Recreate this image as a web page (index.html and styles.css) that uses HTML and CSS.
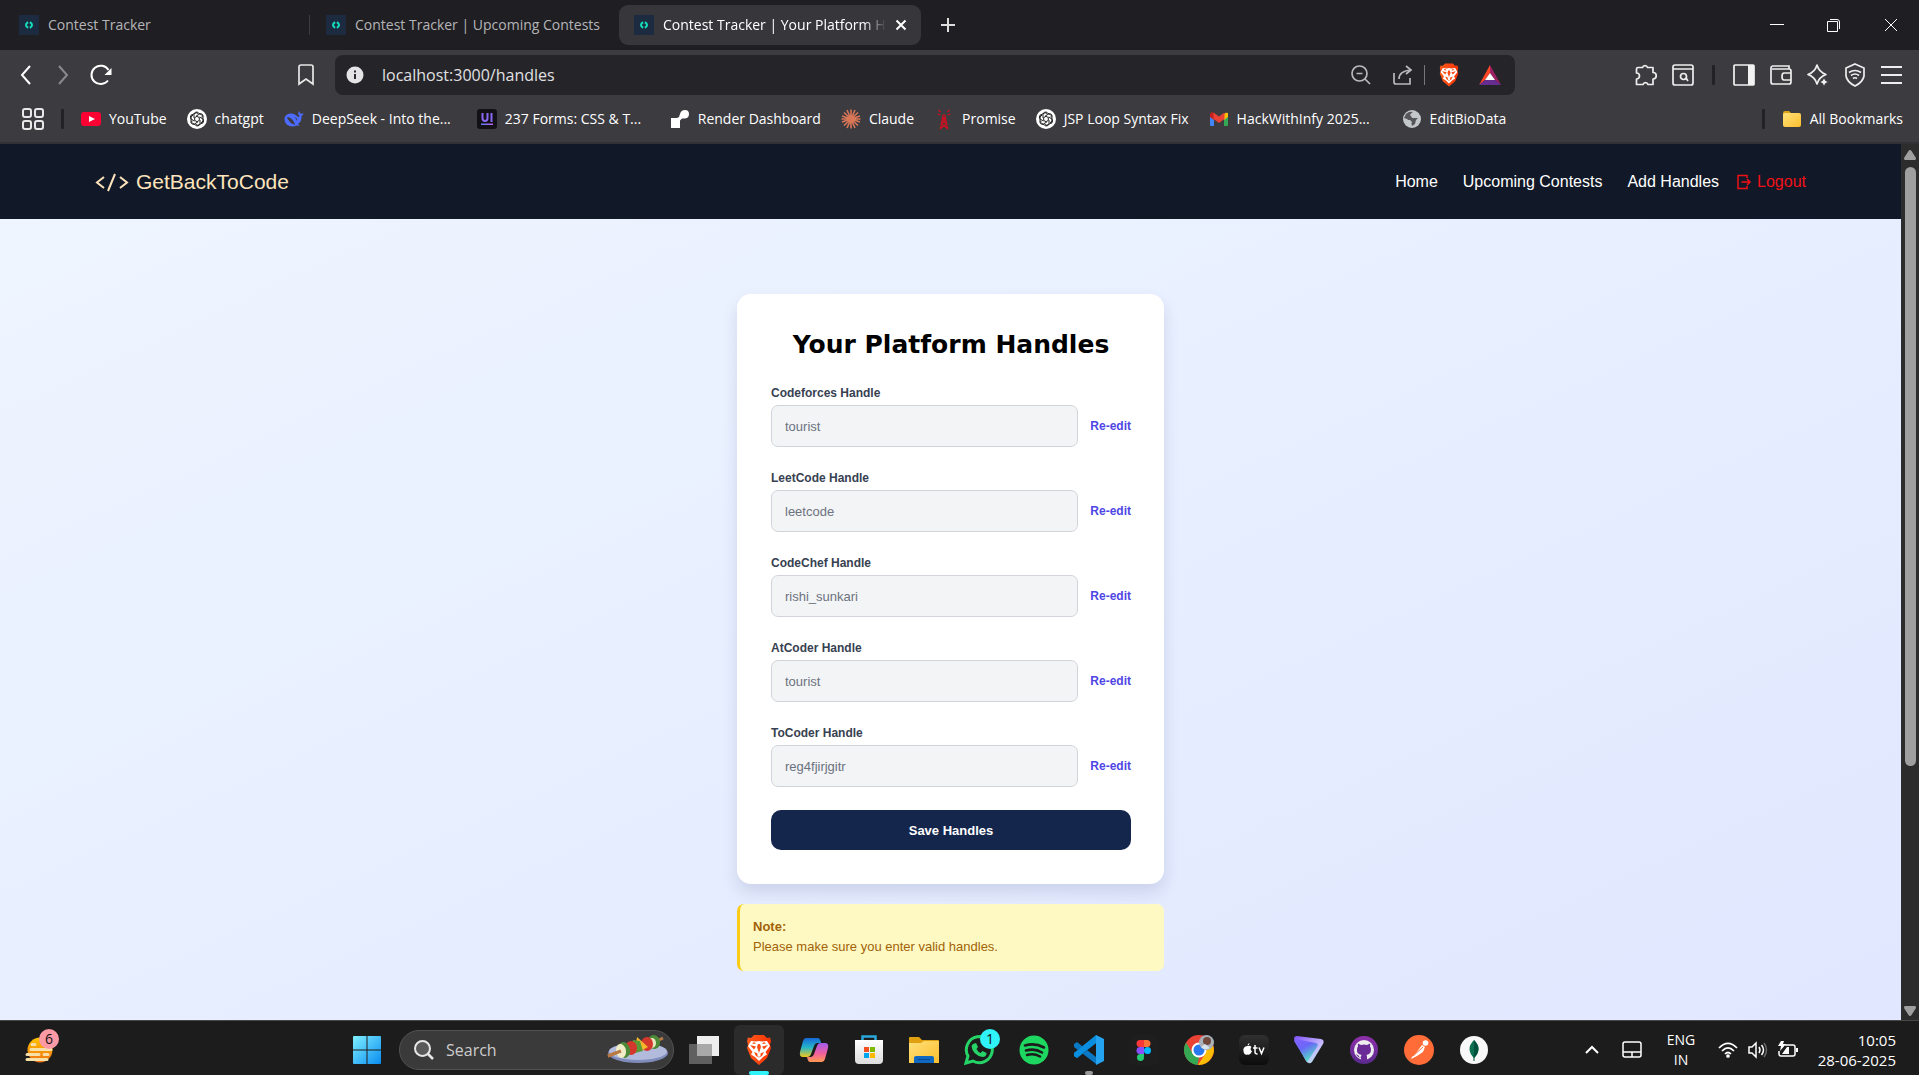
FILE: index.html
```html
<!DOCTYPE html>
<html lang="en">
<head>
<meta charset="utf-8">
<title>Contest Tracker | Your Platform Handles</title>
<link rel="stylesheet" href="styles.css">
</head>
<body>
<svg class="defs" aria-hidden="true">
  <defs>
    <linearGradient id="win" x1="0" y1="0" x2="1" y2="1"><stop offset="0" stop-color="#7ff0ff"/><stop offset="1" stop-color="#0a8cf0"/></linearGradient>
    <linearGradient id="fold" x1="0" y1="0" x2="1" y2="1"><stop offset="0" stop-color="#ffe07a"/><stop offset="1" stop-color="#fcbf2d"/></linearGradient>
    <linearGradient id="sun" x1="0" y1="0" x2="0" y2="1"><stop offset="0" stop-color="#ffc400"/><stop offset="1" stop-color="#f07010"/></linearGradient>
    <linearGradient id="lion" x1="0" y1="0" x2="1" y2="0"><stop offset="0" stop-color="#ff5a1c"/><stop offset="1" stop-color="#fb3404"/></linearGradient>
    <linearGradient id="cpa" x1="0" y1="0" x2="0" y2="1"><stop offset="0" stop-color="#1668d8"/><stop offset=".5" stop-color="#25b6c8"/><stop offset="1" stop-color="#f2c81c"/></linearGradient>
    <linearGradient id="cpb" x1="0" y1="0" x2="0" y2="1"><stop offset="0" stop-color="#a45cf0"/><stop offset=".55" stop-color="#f0609c"/><stop offset="1" stop-color="#ff9a50"/></linearGradient>
    <linearGradient id="pro" x1="0" y1="0" x2=".6" y2="1"><stop offset="0" stop-color="#8560ff"/><stop offset=".45" stop-color="#6a68f8"/><stop offset="1" stop-color="#50e8c0"/></linearGradient>
    <linearGradient id="proe" x1="0" y1="0" x2="1" y2="1"><stop offset="0" stop-color="#7c50f8"/><stop offset=".6" stop-color="#c8baff"/><stop offset="1" stop-color="#a0ffe0"/></linearGradient>
    <linearGradient id="git" x1="0" y1="0" x2="0" y2="1"><stop offset="0" stop-color="#8f30ac"/><stop offset="1" stop-color="#582a8c"/></linearGradient>
    <linearGradient id="store" x1="0" y1="0" x2="0" y2="1"><stop offset="0" stop-color="#fff"/><stop offset="1" stop-color="#dcdcdc"/></linearGradient>
    <linearGradient id="ui" x1="0" y1="0" x2="1" y2="0"><stop offset="0" stop-color="#5b7cff"/><stop offset="1" stop-color="#c060f0"/></linearGradient>
    <linearGradient id="tv" x1="0" y1="0" x2="0" y2="1"><stop offset="0" stop-color="#303030"/><stop offset="1" stop-color="#0c0c0c"/></linearGradient>
    <symbol id="favicon" viewBox="0 0 20 20"><path fill="#1d2b41" d="M0 0h20v20H0z"/><path fill="none" stroke="#13e0bd" stroke-width="2" d="M9.200 7.200Q7 8 7 10t2.200 2.800M10.800 7.200Q13 8 13 10t-2.200 2.800"/></symbol>
    <symbol id="lion-face" viewBox="0 0 26 30"><path fill="url(#lion)" d="M8 0h10l3 3 3-.5 1 3.500-1 4 1 3-4 10-8 7-8-7-4-10 1-3-1-4 1-3.500L5 3z"/><path fill="#fff" d="m5 6 5 .5 3-.5 3 .5 5-.5 3 5-4.500 6 1.500 2.500-4 2.500-4 4-4-4L5 19.500 6.500 17 2 11z"/><path fill="#fa4c12" d="m4 10 6 1.500-2 3zM22 10l-6 1.500 2 3zM11 12l2 6 2-6-1-3h-2zM8 17l5 2 5-2-2 4-3 1.500L10 21zM8 7l2 2-4-.5zM18 7l-2 2 4-.5z"/><path fill="#fff" d="m11.500 17 1.500 1.500 1.500-1.500v4l-1.500 1-1.500-1z"/></symbol>
    <symbol id="openai" viewBox="0 0 20 20"><circle cx="10" cy="10" r="10" fill="#fff"/><g fill="none" stroke="#222" stroke-width="1"><path id="petal" d="M7 9V5.500a2.600 2.600 0 0 1 4.600-1.500L14 5.400a2.600 2.600 0 0 1 1.200 3"/><use href="#petal" transform="rotate(60 10 10)"/><use href="#petal" transform="rotate(120 10 10)"/><use href="#petal" transform="rotate(180 10 10)"/><use href="#petal" transform="rotate(240 10 10)"/><use href="#petal" transform="rotate(300 10 10)"/><path d="m10 7.300 2.300 1.300v2.800L10 12.700l-2.300-1.300V8.600z"/></g></symbol>
    <symbol id="folder" viewBox="0 0 20 20"><path fill="#dba018" d="M1 4q0-2 2-2h4l2 2v5H1z"/><rect x="1" y="4" width="18" height="14" rx="2" fill="url(#fold)"/></symbol>
  </defs>
</svg>

<header class="browser">
  <div class="tabs">
    <button class="tab"><svg width="20" height="20"><use href="#favicon"/></svg><span class="tab-title">Contest Tracker</span></button>
    <span class="tab-rule"></span>
    <button class="tab"><svg width="20" height="20"><use href="#favicon"/></svg><span class="tab-title">Contest Tracker | Upcoming Contests</span></button>
    <div class="tab tab-active"><svg width="20" height="20"><use href="#favicon"/></svg><span class="tab-title tab-fade">Contest Tracker | Your Platform Handles</span><button class="icon-btn" aria-label="Close tab"><svg width="12" height="12" viewBox="0 0 12 12"><path d="m1.500 1.500 9 9m0-9-9 9" stroke="#fff" stroke-width="2"/></svg></button></div>
    <button class="icon-btn new-tab" aria-label="New tab"><svg width="14" height="14" viewBox="0 0 14 14"><path d="M7 0v14M0 7h14" stroke="#ddd" stroke-width="2"/></svg></button>
    <div class="window-controls">
      <button class="icon-btn" aria-label="Minimize"><svg width="14" height="14" viewBox="0 0 14 14"><path d="M0 6.500h14" stroke="#fff"/></svg></button>
      <button class="icon-btn" aria-label="Restore"><svg width="14" height="14" viewBox="0 0 14 14"><path d="M.5 3.500h10v10H.5zM3 1.500h7q2.500 0 2.500 2.500v7" fill="none" stroke="#fff"/></svg></button>
      <button class="icon-btn" aria-label="Close"><svg width="14" height="14" viewBox="0 0 14 14"><path d="m1 1 12 12m0-12L1 13" stroke="#fff"/></svg></button>
    </div>
  </div>

  <div class="toolbar">
    <div class="nav-buttons">
      <button class="icon-btn" aria-label="Back"><svg width="20" height="22" viewBox="0 0 20 22"><path d="m14 2-8 9 8 9" fill="none" stroke="#fff" stroke-width="2"/></svg></button>
      <button class="icon-btn" aria-label="Forward"><svg width="20" height="22" viewBox="0 0 20 22"><path d="m6 2 8 9-8 9" fill="none" stroke="#8a8a8d" stroke-width="2"/></svg></button>
      <button class="icon-btn" aria-label="Reload"><svg width="22" height="22" viewBox="0 0 22 22"><path d="M18.500 6A9.200 9.200 0 1 0 18 16.500" fill="none" stroke="#fff" stroke-width="2"/><path d="M21.500 4v7h-7z" fill="#fff"/></svg></button>
    </div>
    <button class="icon-btn bookmark" aria-label="Bookmark this page"><svg width="16" height="22" viewBox="0 0 16 22"><path d="M1 20V3q0-2 2-2h10q2 0 2 2v17l-7-5z" fill="none" stroke="#e8e8e8" stroke-width="1.700"/></svg></button>
    <div class="address">
      <svg width="18" height="18" viewBox="0 0 18 18"><circle cx="9" cy="9" r="8.500" fill="#e4e4e6"/><path d="M9 8v5M9 4.500V6.500" stroke="#29292d" stroke-width="2"/></svg>
      <input class="url" type="text" aria-label="Address" value="localhost:3000/handles">
      <svg width="20" height="20" viewBox="0 0 20 20" fill="none" stroke="#b9b9bc" stroke-width="1.700"><circle cx="8.500" cy="8.500" r="7.500"/><path d="m14 14 5 5M5.500 8.500h6"/></svg>
      <svg class="share" width="20" height="20" viewBox="0 0 20 20" fill="none" stroke="#b9b9bc" stroke-width="1.700"><path d="M1 8v9q0 2 2 2h14v-6M6 14q0-8 12-9M13 1l5 4-5 4"/></svg>
      <span class="address-rule"></span>
      <svg width="20" height="24"><use href="#lion-face"/></svg>
      <svg class="bat" width="22" height="20" viewBox="0 0 22 20"><path fill="#ff4724" d="M11 0v8l-5 7-6 5z"/><path fill="#9e1f63" d="M11 0v8l5 7 6 5z"/><path fill="#662d91" d="M0 20 6 15h10l6 5z"/><path fill="#fff" d="m11 8 5 7H6z"/></svg>
    </div>
    <div class="tools">
      <button class="icon-btn" aria-label="Extensions"><svg width="22" height="22" viewBox="0 0 22 22" fill="none" stroke="#eee" stroke-width="1.700" stroke-linejoin="round"><path d="M3 3.500h4.500a2.600 2.600 0 0 1 5 0H18v5a2.800 2.800 0 0 1 0 6.500v5.500h-5a2.600 2.600 0 0 0-5 0H1.500V15a3 3 0 0 0 0-6V5q0-1.500 1.500-1.500z"/></svg></button>
      <button class="icon-btn" aria-label="Search page"><svg width="22" height="22" viewBox="0 0 22 22" fill="none" stroke="#eee" stroke-width="1.700"><rect x="1" y="1" width="20" height="20" rx="2"/><path d="M1 5h20m-7 9 2 3"/><circle cx="11.500" cy="12.500" r="3"/></svg></button>
      <span class="rule"></span>
      <button class="icon-btn" aria-label="Sidebar"><svg width="22" height="22" viewBox="0 0 22 22"><rect x="1" y="1" width="20" height="20" rx="1" fill="none" stroke="#f2f2f2" stroke-width="1.700"/><path fill="#f2f2f2" d="M15 1h6v20h-6z"/></svg></button>
      <button class="icon-btn" aria-label="Wallet"><svg width="22" height="22" viewBox="0 0 22 22" fill="none" stroke="#eee" stroke-width="1.700"><path d="M19 5V2H3a2 2 0 0 0-2 2v14q0 2 2 2h16q2 0 2-2V7q0-2-2-2H2M21 9h-7q-2 0-2 3.500t2 3.500h7z"/></svg></button>
      <button class="icon-btn" aria-label="Leo AI"><svg width="22" height="22" viewBox="0 0 22 22"><path fill="none" stroke="#eee" stroke-width="1.700" stroke-linejoin="round" d="M10 1q2 7 9 9.500-7 2.500-9 9.500-2-7-9-9.500Q8 8 10 1z"/><path fill="#eee" stroke="#3c3b3f" d="m17 13 1.500 3.500L22 18l-3.500 1.500L17 23l-1.500-3.500L12 18l3.500-1.500z"/></svg></button>
      <button class="icon-btn" aria-label="VPN"><svg width="22" height="24" viewBox="0 0 22 24" fill="none" stroke="#eee" stroke-width="1.700"><path d="m11 1 9 4v8q-1 6-9 10-8-4-9-10V5zM5 9.500q6-4 12 0M7 12.500q4-3 8 0M9 15.500q2-1.500 4 0"/></svg></button>
      <button class="icon-btn" aria-label="Menu"><svg width="22" height="20" viewBox="0 0 22 20"><path d="M0 2h21M0 10h21M0 18h21" stroke="#eee" stroke-width="2"/></svg></button>
    </div>
  </div>

  <nav class="bookmarks" aria-label="Bookmarks">
    <svg width="22" height="22" viewBox="0 0 22 22" fill="none" stroke="#e8e8e8" stroke-width="2"><rect x="1" y="1" width="8" height="8" rx="2"/><rect x="13" y="1" width="8" height="8" rx="2"/><rect x="1" y="13" width="8" height="8" rx="2"/><rect x="13" y="13" width="8" height="8" rx="2"/></svg>
    <span class="rule"></span>
    <a class="mark" href="#"><svg width="20" height="20" viewBox="0 0 20 20"><rect y="3" width="20" height="14" rx="3" fill="#ff0033"/><path fill="#fff" d="m8 7 6 3-6 3z"/></svg>YouTube</a>
    <a class="mark" href="#"><svg width="20" height="20"><use href="#openai"/></svg>chatgpt</a>
    <a class="mark" href="#"><svg width="20" height="20" viewBox="0 0 20 20"><path fill="#4d6bfe" d="M19.500 4q-1.500 1-3 .500-1-.5-1-2.500l-1 1q-1 2 1 4-1 1.500-2 .5Q10 4 7 4.500 0 5 .5 11q1 6 8 6.500 2.500 0 4-1l3 .5-1.500-2q4-3 3.500-8 2-1 2-3z"/><path fill="#3c3b3f" d="M3 8q4 0 7 5l1 3Q4 13 3 8zM10 8q4 1 3 4-1-3-3-4z"/></svg><span class="mark-long">DeepSeek - Into the...</span></a>
    <a class="mark" href="#"><svg width="20" height="20" viewBox="0 0 20 20"><rect width="20" height="20" rx="3" fill="#121216"/><path d="M5.500 4v5q0 3 2.500 3t2.500-3V4M14.500 4v9" fill="none" stroke="#8968f4" stroke-width="2"/><path fill="url(#ui)" d="M4 14.500h12v1.500H4z"/></svg><span class="mark-long">237 Forms: CSS &amp; T...</span></a>
    <a class="mark" href="#"><svg width="20" height="20" viewBox="0 0 20 20"><path fill="#fff" d="M1 9h6l2-1 1-3q1-4 5-4 4 0 4 4t-4 4.500h-3l-2 2V19H1z"/></svg>Render Dashboard</a>
    <a class="mark" href="#"><svg width="20" height="20" viewBox="0 0 20 20"><path d="M10 .5v19M.5 10h19M3 3.500l14 13M3 16.500l14-13M6 1l8 18M14 1 6 19M1 7l18 6M1 13l18-6" stroke="#d97757" stroke-width="1.600"/></svg>Claude</a>
    <a class="mark" href="#"><svg width="20" height="20" viewBox="0 0 20 20"><path d="M9 6 6.500 19.500l6-4.500-4-4 3-3M11 6l2.500 13.500-6-4.500 4-4-3-3M8.500 6h3M6.500 6 3.500 5m3-2L4.500 1m9 5 3-1m-3-2 2-2" fill="none" stroke="#d01020" stroke-width="1.200"/></svg>Promise</a>
    <a class="mark" href="#"><svg width="20" height="20"><use href="#openai"/></svg>JSP Loop Syntax Fix</a>
    <a class="mark" href="#"><svg width="20" height="20" viewBox="0 0 20 20"><path fill="#4285f4" d="M1 5h4v12H2q-1 0-1-1z"/><path fill="#34a853" d="M15 5h4v11q0 1-1 1h-3z"/><path fill="#fbbc04" d="M15 5q2-2 4-1v4l-4 3z"/><path fill="#c5221f" d="M1 5q1-3 4-1v7L1 8z"/><path fill="#ea4335" d="m4.500 3.500 5.500 4 5.500-4V10L10 14l-5.500-4z"/></svg><span class="mark-long">HackWithInfy 2025...</span></a>
    <a class="mark" href="#"><svg width="20" height="20" viewBox="0 0 20 20"><circle cx="10" cy="10" r="9" fill="#c4c7c9"/><path fill="#3c3b3f" d="M4 5q3-3 7-2-2 1-3 3l3 3h5l-2 2-1 4-3 2-1-4-4-3-3-1z" opacity=".8"/><path fill="#c4c7c9" d="m9 6 3-2 3 2-1 2-4 1zM4 11l4 0 2 2-2 4-3-2z"/></svg>EditBioData</a>
    <span class="rule push"></span>
    <a class="mark" href="#"><svg width="20" height="20"><use href="#folder"/></svg>All Bookmarks</a>
  </nav>
</header>

<div class="viewport">
  <div class="page">
    <header class="site-nav">
      <a class="brand" href="#"><svg width="34" height="18" viewBox="0 0 34 18" fill="none" stroke="#fde4bd" stroke-width="2"><path d="m9 4-7 5.500L9 15M20 1l-7 17M25 4l7 5.500-7 5.500"/></svg>GetBackToCode</a>
      <nav class="site-links">
        <a href="#">Home</a>
        <a href="#">Upcoming Contests</a>
        <a href="#">Add Handles</a>
        <button class="logout"><svg width="14" height="16" viewBox="0 0 14 16" fill="none" stroke="#f01018" stroke-width="1.500"><path d="M10 4V1.500H1v13h9V12M4.500 8H13m-3-3 3 3-3 3"/></svg>Logout</button>
      </nav>
    </header>
    <main class="content">
      <form class="card">
        <h1>Your Platform Handles</h1>
        <div class="field"><label for="cf">Codeforces Handle</label><div class="field-row"><input id="cf" type="text" value="tourist" disabled><button type="button" class="edit">Re-edit</button></div></div>
        <div class="field"><label for="lc">LeetCode Handle</label><div class="field-row"><input id="lc" type="text" value="leetcode" disabled><button type="button" class="edit">Re-edit</button></div></div>
        <div class="field"><label for="cc">CodeChef Handle</label><div class="field-row"><input id="cc" type="text" value="rishi_sunkari" disabled><button type="button" class="edit">Re-edit</button></div></div>
        <div class="field"><label for="ac">AtCoder Handle</label><div class="field-row"><input id="ac" type="text" value="tourist" disabled><button type="button" class="edit">Re-edit</button></div></div>
        <div class="field"><label for="tc">ToCoder Handle</label><div class="field-row"><input id="tc" type="text" value="reg4fjirjgitr" disabled><button type="button" class="edit">Re-edit</button></div></div>
        <button class="save" type="submit">Save Handles</button>
      </form>
      <aside class="note"><strong>Note:</strong><p>Please make sure you enter valid handles.</p></aside>
    </main>
  </div>
  <div class="scrollbar" aria-hidden="true">
    <svg width="12" height="10" viewBox="0 0 12 10"><path fill="#9f9f9f" d="M6 0q1 0 1.500 1L12 8q0 2-1 2H1Q0 10 0 8l4.500-7Q5 0 6 0z"/></svg>
    <div class="track"><div class="thumb"></div></div>
    <svg width="12" height="10" viewBox="0 0 12 10"><path fill="#9f9f9f" d="M6 10q1 0 1.500-1L12 2q0-2-1-2H1Q0 0 0 2l4.500 7Q5 10 6 10z"/></svg>
  </div>
</div>

<footer class="taskbar">
  <button class="icon-btn weather" aria-label="Weather"><svg width="28" height="28" viewBox="0 0 28 28"><circle cx="15" cy="14" r="12.500" fill="url(#sun)"/><path d="M7 8.500h3M6 13.500h20M2 18.500h12m5 0h4M2 23.500h20" stroke="#f7dfa8" stroke-width="3" stroke-linecap="round"/></svg><span class="badge badge-pink">6</span></button>
  <div class="apps">
    <button class="app" aria-label="Start"><svg width="30" height="30" viewBox="0 0 30 30"><path fill="url(#win)" d="M1 2q0-1 1-1h12.500v13.500H1zM15.500 1H28q1 0 1 1v12.500H15.500zM1 15.500h13.500V29H2q-1 0-1-1zM15.500 15.500H29V28q0 1-1 1H15.500z"/></svg></button>
    <label class="search">
      <svg width="20" height="20" viewBox="0 0 20 20" fill="none" stroke="#e8e8e8" stroke-width="2"><circle cx="8.500" cy="8.500" r="7.500" fill="#5a5a5a"/><path d="m14 14 5 5" stroke-width="2.500"/></svg>
      <input type="text" placeholder="Search" aria-label="Search">
      <svg width="62" height="30" viewBox="0 0 62 30"><ellipse cx="31" cy="18" rx="30" ry="10" fill="#7f8bbb"/><ellipse cx="31" cy="16.500" rx="29" ry="8.500" fill="#b3bbdd"/><path d="M1 21 14 16M50 6l6-3" stroke="#b87a45" stroke-width="3"/><ellipse cx="47" cy="7" rx="6" ry="7" transform="rotate(-15 47 7)" fill="#4d8a38"/><ellipse cx="45" cy="8" rx="4" ry="5" fill="#e6e6c0"/><ellipse cx="40" cy="9" rx="6" ry="7" fill="#d4382c"/><path fill="#f6b62c" d="m30 2 11 10-7 4-5-7z"/><path fill="#5c9a38" d="m26 5 7 1 3 10-8 2-4-7z"/><ellipse cx="24" cy="13" rx="6" ry="7" fill="#d4382c"/><ellipse cx="17" cy="15" rx="6" ry="8" transform="rotate(-15 17 15)" fill="#4d8a38"/><ellipse cx="14" cy="16" rx="5" ry="7" transform="rotate(-10 14 16)" fill="#f0ecc8"/><path d="m1 21 13-5" stroke="#b87a45" stroke-width="3"/></svg>
    </label>
    <button class="app" aria-label="Task view"><svg width="30" height="30" viewBox="0 0 30 30"><path fill="#eee" d="M8 1h22v20H8z"/><path fill="#606060" d="M0 9h23v20H0z"/><path fill="#a8a8a8" d="M8 9h15v12H8z"/></svg></button>
    <button class="app app-active" aria-label="Brave"><svg width="26" height="30"><use href="#lion-face"/></svg><span class="running running-on"></span></button>
    <button class="app" aria-label="Copilot"><svg width="30" height="30" viewBox="0 0 30 30"><path fill="url(#cpa)" d="M7 3h12q2 0 3 5h-4q-2 0-3 3l-3 8q-1 3-4 3H4q-4 0-3-5L4 6q1-3 3-3z"/><path fill="url(#cpb)" d="M23 27H11q-2 0-3-5h4q2 0 3-3l3-8q1-3 4-3h4q4 0 3 5l-3 11q-1 3-3 3z"/></svg></button>
    <button class="app" aria-label="Store"><svg width="30" height="30" viewBox="0 0 30 30"><path d="M8.500 7V1.500h13V7" fill="none" stroke="#2aa8dc" stroke-width="2.500"/><path fill="url(#store)" d="M1 5h28v20q0 4-4 4H5q-4 0-4-4z"/><path fill="#f25022" d="M10 12h5v5h-5z"/><path fill="#7fba00" d="M16 12h5v5h-5z"/><path fill="#00a4ef" d="M10 18h5v5h-5z"/><path fill="#ffb900" d="M16 18h5v5h-5z"/></svg></button>
    <button class="app" aria-label="File Explorer"><svg width="30" height="30" viewBox="0 0 30 30"><path fill="#e0a010" d="M0 3q0-1 1-1h9l3 3h16q1 0 1 1v6H0z"/><path fill="url(#fold)" d="M0 8h12l3-2h15v22H0z"/><path fill="#1068c0" d="M5 28v-5q0-2 2-2h16q2 0 2 2v5z"/><path stroke="#084a90" d="M9 24.500h12"/></svg></button>
    <button class="app" aria-label="WhatsApp"><svg width="30" height="30" viewBox="0 0 30 30"><path fill="none" stroke="#25d366" stroke-width="3" d="m2 28 2-7a13 13 0 1 1 5 5z"/><path fill="#25d366" d="m9 9 3-1 2 4-1.500 2q1.500 3 4 4l2-2 4 2q0 4-4 4-10-2-11-11z"/></svg><span class="badge badge-cyan">1</span></button>
    <button class="app" aria-label="Spotify"><svg width="30" height="30" viewBox="0 0 30 30"><circle cx="15" cy="15" r="14.500" fill="#1ed760"/><path d="M6 10.500q10-3 19 2M7 15.500q9-2.500 16 2M8 20q7-2 13 1.500" fill="none" stroke="#1c1c1c" stroke-width="2.600" stroke-linecap="round"/></svg></button>
    <button class="app" aria-label="Visual Studio Code"><svg width="30" height="30" viewBox="0 0 30 30"><path fill="#0a78c4" d="m0 9 3-2 19 15v7L0 12zM0 21l3 2L22 8V1L0 18z"/><path fill="#0a8ee0" d="m0 21 3 2L22 8V0L0 18z"/><path fill="#24a4f0" d="m22 0 8 4v22l-8 4z"/></svg><span class="running"></span></button>
    <button class="app" aria-label="Figma"><svg width="30" height="30" viewBox="0 0 30 30"><rect width="30" height="30" rx="5" fill="#1e1e1e"/><path fill="#ff3737" d="M15 5h-4a3.500 3.500 0 0 0 0 7h4z"/><path fill="#ff7237" d="M15 5h3a3.500 3.500 0 0 1 0 7h-3z"/><path fill="#874fff" d="M15 12h-4a3.500 3.500 0 0 0 0 7h4z"/><circle cx="18.500" cy="15.500" r="3.500" fill="#00b6ff"/><path fill="#24cb71" d="M15 19h-4a3.500 3.500 0 1 0 4 3.500z"/></svg></button>
    <button class="app" aria-label="Chrome"><svg width="30" height="30" viewBox="0 0 30 30"><circle cx="15" cy="15" r="15" fill="#ea4335"/><path fill="#34a853" d="M2 7.500 9 19l6 3-1.500 8A15 15 0 0 1 2 7.500z"/><path fill="#fbbc04" d="M14 30 21 19l1-11h6a15 15 0 0 1-14 22z"/><circle cx="15" cy="15" r="7.500" fill="#fff"/><circle cx="15" cy="15" r="5.500" fill="#2878f0"/><circle cx="22.500" cy="7.500" r="7.500" fill="#a8b0b8"/><circle cx="23" cy="6" r="4" fill="#70483c"/><path fill="#d8e4ec" d="m17 12 4-3 5 4q-5 3-9-1z"/></svg></button>
    <button class="app" aria-label="Apple TV"><svg width="30" height="30" viewBox="0 0 30 30"><rect width="30" height="30" rx="6" fill="url(#tv)"/><path fill="#fff" d="M8.500 11q2.500-1 4 1-2 2 .5 4.500-2 4-4.500 3-3 1-4-3-1-5 4-5.500zM8.500 10.500q0-2 2-2.500 0 2-2 2.500z"/><path d="M16 10v7q0 2 2.500 2M14 13h4.500M20 12.500l2.500 6 2.500-6" fill="none" stroke="#fff" stroke-width="1.500"/></svg></button>
    <button class="app" aria-label="Proton VPN"><svg width="30" height="30" viewBox="0 0 30 30"><path fill="url(#proe)" d="M3 1 27 4q4 1 2 5L18 27q-3 3-6-1L0 4q0-3 3-3z"/><path fill="url(#pro)" d="M1 4 22 8q3 1 1 4L13 27 0 6z"/></svg></button>
    <button class="app" aria-label="GitHub Desktop"><svg width="30" height="30" viewBox="0 0 30 30"><circle cx="15" cy="15" r="14" fill="url(#git)"/><circle cx="15" cy="15" r="10" fill="#eee"/><path fill="#6c2c98" d="M12 26v-3.500q-3 .5-4-2l-1-1q2-.5 3 2 1 1 2 0l.5-1.500q-5-1-4.500-5.500 0-2 1-3-.5-1.500 0-3l3 1.500q3-1 6 0l3-1.500q.5 1.500 0 3 1 1 1 3 0 4.500-4.500 5.500l.5 1.500V26z"/></svg></button>
    <button class="app" aria-label="Postman"><svg width="30" height="30" viewBox="0 0 30 30"><circle cx="15" cy="15" r="15" fill="#ff6c37"/><circle cx="21.500" cy="8" r="2.800" fill="#fff"/><path fill="#fff" d="m18 10 3 2-2 5-6 4-6 3 1-2 4-4z"/><path d="m9 21 10-9" stroke="#ff6c37"/></svg></button>
    <button class="app" aria-label="MongoDB Compass"><svg width="30" height="30" viewBox="0 0 30 30"><circle cx="15" cy="15" r="14" fill="#f8f8f8"/><path fill="#0a7050" d="M15 5q9 9 0 18-9-9 0-18z"/><path fill="#00523c" d="M15 5q9 9 0 18z"/><path stroke="#00523c" d="M15 20v6"/></svg></button>
  </div>
  <div class="tray">
    <svg width="14" height="10" viewBox="0 0 14 10"><path d="m1 8 6-6 6 6" fill="none" stroke="#fff" stroke-width="2"/></svg>
    <svg class="pad" width="20" height="18" viewBox="0 0 20 18"><path d="M3 1h14q2 0 2 2v11q0 2-2 2H3q-2 0-2-2V3q0-2 2-2zM1 11h18M10 11v5" fill="none" stroke="#fff" stroke-width="1.500"/></svg>
    <div class="lang"><span>ENG</span><span>IN</span></div>
    <div class="status">
      <svg width="20" height="18" viewBox="0 0 20 18" fill="none" stroke="#fff" stroke-width="1.700"><path d="M1 7q9-9 18 0M4 10q6-6 12 0M7 13q3-3 6 0"/><circle cx="10" cy="15" r="1"/></svg>
      <svg width="20" height="18" viewBox="0 0 20 18" fill="none" stroke="#fff" stroke-width="1.500"><path d="M1 6h3l4-4v14l-4-4H1zM11 6q2 3 0 6M13.500 4q4 5 0 10"/><path stroke="#666" d="M16 2q5 7 0 14"/></svg>
      <svg width="20" height="18" viewBox="0 0 20 18"><path d="M7 4h8q2 0 2 2v7q0 2-2 2H3q-2 0-2-2v-3" fill="none" stroke="#fff" stroke-width="1.500"/><path fill="#fff" d="M18 7h2v4h-2zM4 13 9 6h2v7zM3 0h3L5 3h3L2 10l1-5H0z"/></svg>
    </div>
    <div class="clock"><span>10:05</span><span>28-06-2025</span></div>
  </div>
</footer>
</body>
</html>
```
FILE: styles.css
```css
* { box-sizing: border-box; }
body {
  margin: 0;
  min-height: 100vh;
  display: flex;
  flex-direction: column;
  font-family: "Open Sans", "Noto Sans", sans-serif;
  font-size: 14px;
  background: #1c1c1c;
}
svg { display: block; flex: none; overflow: visible; }
button, input { font: inherit; color: inherit; border: 0; background: none; padding: 0; margin: 0; }
a { color: inherit; text-decoration: none; }
.defs { position: absolute; width: 0; height: 0; }
.icon-btn { display: flex; align-items: center; justify-content: center; }

/* Browser chrome */
.browser { background: #3c3b3f; color: #fff; border-bottom: 2px solid #323136; }
.tabs { display: flex; align-items: center; height: 50px; padding-left: 7px; background: #1f1e23; color: #b5b5b7; }
.tab { display: flex; align-items: center; gap: 9px; width: 302px; height: 40px; padding: 0 12px; text-align: left; white-space: nowrap; }
.tab-rule { width: 1px; height: 20px; margin-right: 4px; background: #3c3b3f; }
.tab-title { overflow: hidden; padding-bottom: 2px; }
.tab-active { padding: 0 14px 0 15px; margin-left: 3px; border-radius: 9px; background: #37363b; color: #fff; }
.tab-fade { flex: 1; -webkit-mask-image: linear-gradient(90deg, #000 90%, transparent); mask-image: linear-gradient(90deg, #000 90%, transparent); }
.new-tab { width: 54px; height: 40px; }
.window-controls { display: flex; margin-left: auto; }
.window-controls .icon-btn { width: 57px; height: 48px; }
.toolbar { display: flex; align-items: center; height: 50px; padding: 0 16px; }
.nav-buttons { display: flex; gap: 17px; }
.bookmark { margin-left: 186px; }
.address { display: flex; align-items: center; flex: 1; max-width: 1180px; height: 40px; margin-left: 21px; padding: 0 14px 0 11px; border-radius: 8px; background: #252429; }
.url { flex: 1; min-width: 0; padding-left: 18px; font-size: 16px; color: #e0e0e2; }
.share { margin-left: 22px; }
.address-rule { width: 1px; height: 20px; margin: 0 14px 0 11px; background: #77777a; }
.bat { margin-left: 20px; }
.tools { display: flex; align-items: center; gap: 15px; margin-left: auto; }
.tools .rule { margin: 0 3px; }
.rule { width: 3px; height: 20px; border-radius: 1px; background: #222126; }
.bookmarks { display: flex; align-items: center; gap: 20px; height: 42px; padding: 0 16px 5px 22px; }
.bookmarks .rule { margin: 0 -3px; }
.bookmarks .push { margin-left: auto; }
.mark { display: flex; align-items: center; gap: 8px; white-space: nowrap; }
.mark-long { width: 145px; }

/* Page */
.viewport { flex: 1; display: flex; font-family: "Liberation Sans", Arial, sans-serif; }
.page { flex: 1; display: flex; flex-direction: column; background: linear-gradient(to bottom right, #eff6ff, #e0e7ff); }
.site-nav { display: flex; align-items: center; justify-content: space-between; height: 75px; padding: 0 95px; background: #111827; color: #fff; }
.brand { display: flex; align-items: center; gap: 7px; font-size: 21px; color: #fde4bd; }
.site-links { display: flex; align-items: center; gap: 25px; font-size: 16px; }
.logout { display: flex; align-items: center; gap: 6px; margin-left: -7px; color: #f01018; }
.content { flex: 1; display: flex; flex-direction: column; align-items: center; gap: 20px; padding: 75px 16px 48px; }
.card { width: 427px; max-width: 100%; padding: 34px 33px 34px 34px; border-radius: 14px; background: #fff; box-shadow: 0 8px 16px rgba(30, 41, 90, 0.13); }
h1 { margin: 0 0 23px; font: bold 25px/34px "DejaVu Sans", sans-serif; text-align: center; white-space: nowrap; color: #000; }
.field { margin-bottom: 23px; }
.field label { display: block; margin-bottom: 4px; font-size: 12px; line-height: 16px; font-weight: bold; color: #374151; }
.field-row { display: flex; align-items: center; gap: 12px; }
.field input { flex: 1; min-width: 0; height: 42px; padding: 0 13px; border: 1px solid #d1d5db; border-radius: 7px; background: #f3f4f6; font-size: 13px; color: #6b7280; }
.edit { font-size: 12px; font-weight: bold; color: #4f46e5; }
.save { display: block; width: 100%; height: 40px; border-radius: 10px; background: #15264d; font-size: 13px; font-weight: bold; color: #fff; }
.note { width: 427px; max-width: 100%; padding: 13px 13px 14px; border-left: 3px solid #facc15; border-radius: 7px; background: #fef9c3; font-size: 13px; line-height: 20px; color: #a16207; }
.note strong { display: block; }
.note p { margin: 0; }
.scrollbar { display: flex; flex-direction: column; align-items: center; width: 18px; padding: 6px 0 4px; background: #2c2c2c; }
.track { flex: 1; width: 11px; margin: 7px 0; }
.thumb { height: 72%; border-radius: 6px; background: #9f9f9f; }

/* Taskbar */
.taskbar { display: flex; align-items: center; height: 55px; padding: 4px 23px 0 25px; border-top: 1px solid #484848; background: #1c1c1c; color: #fff; }
.weather { position: relative; }
.badge { position: absolute; width: 20px; height: 20px; border-radius: 50%; font-size: 14px; line-height: 20px; text-align: center; color: #111; }
.badge-pink { top: -7px; right: -6px; background: #fb9aa4; }
.badge-cyan { top: 4px; right: 4px; background: #2ff3f8; }
.apps { display: flex; align-items: center; gap: 5px; margin-left: 289px; }
.app { position: relative; display: flex; align-items: center; justify-content: center; width: 50px; height: 50px; border-radius: 6px; }
.app-active { background: #2b2b2b; }
.running { position: absolute; bottom: 0; left: 21px; width: 8px; height: 4px; border-radius: 2px; background: #999; }
.running-on { left: 15px; width: 20px; background: #2ff3f8; }
.search { display: flex; align-items: center; width: 275px; height: 40px; margin-left: 2px; padding: 0 4px 0 14px; border: 1px solid #525252; border-radius: 20px; background: #3a3a3a; }
.search input { flex: 1; min-width: 0; padding-left: 12px; font-size: 16px; }
.search input::placeholder { color: #ccc; opacity: 1; }
.tray { display: flex; align-items: center; margin-left: auto; }
.pad { margin-left: 23px; }
.lang, .clock { display: flex; flex-direction: column; line-height: 20px; }
.lang { width: 40px; margin-left: 19px; align-items: center; }
.status { display: flex; gap: 10px; margin-left: 17px; }
.clock { width: 98px; align-items: flex-end; font-size: 15px; }
```
